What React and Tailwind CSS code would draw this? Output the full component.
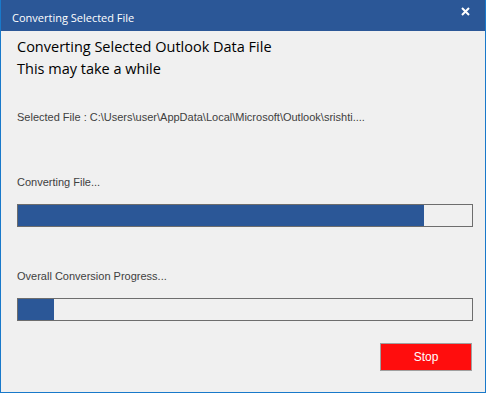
import React from "react";

const ProgressBar = ({ percent }) => (
	<div className="h-[23px] w-[456px] border border-[#6d6d6d] bg-[#f0f0f0]">
		<div className="h-full bg-[#2b5797]" style={{ width: `${percent}%` }} />
	</div>
);

const labelFont = { fontFamily: '"Liberation Sans", sans-serif' };

const App = () => {
	return (
		<div
			className="w-[486px] h-[393px] flex flex-col border border-t-0 border-[#1979ca] bg-[#f0f0f0] overflow-hidden"
			style={{ fontFamily: '"Open Sans", "Liberation Sans", sans-serif' }}
		>
			{/* Title bar */}
			<div className="h-[31px] -mx-px bg-[#2b5797] flex items-center justify-between pl-[12px] pr-[16px] text-white">
				<span className="text-[11px] pt-[6px]">Converting Selected File</span>
				<svg width="9" height="9" viewBox="0 0 9 9" className="-mt-[9px]">
					<path d="M1 1 L8 8 M8 1 L1 8" stroke="white" strokeWidth="2" />
				</svg>
			</div>

			{/* Body */}
			<div className="flex-1 flex flex-col pl-[16px]">
				<div className="mt-[5px] text-[14.5px] leading-[22px] text-black">
					<p>Converting Selected Outlook Data File</p>
					<p>This may take a while</p>
				</div>

				<p className="mt-[29px] text-[11px] leading-[16px] text-[#404040]" style={labelFont}>
					Selected File : C:\Users\user\AppData\Local\Microsoft\Outlook\srishti....
				</p>

				<p className="mt-[49px] text-[11px] leading-[16px] text-[#404040]" style={labelFont}>
					Converting File...
				</p>
				<div className="mt-[14px]">
					<ProgressBar percent={89.5} />
				</div>

				<p className="mt-[41px] text-[11px] leading-[16px] text-[#404040]" style={labelFont}>
					Overall Conversion Progress...
				</p>
				<div className="mt-[14px]">
					<ProgressBar percent={8} />
				</div>

				<div className="flex justify-end pr-[13px] mt-[22px]">
					<button
						className="w-[92px] h-[28px] border border-[#a0a0a0] bg-[#ff0d0d] text-white text-[12px]"
						style={labelFont}
					>
						Stop
					</button>
				</div>
			</div>
		</div>
	);
};

export default App;
